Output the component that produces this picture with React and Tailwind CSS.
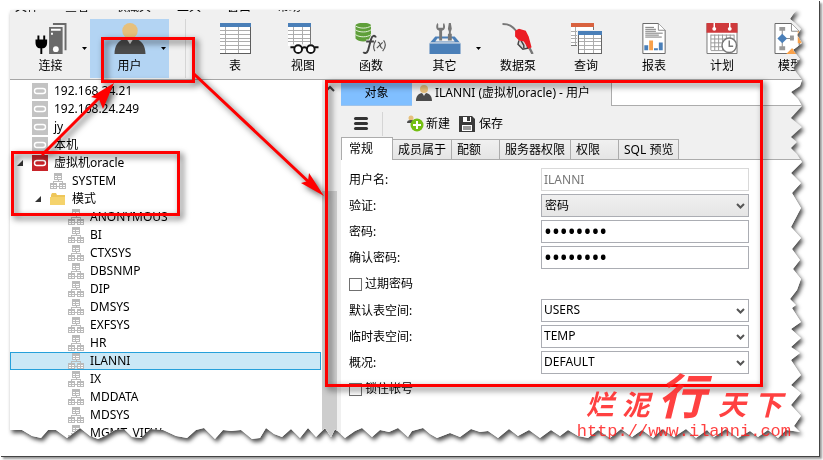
import React from "react";

/* ---------- torn paper outline ---------- */

// distance from the right side of the sheet, distance from its top
const RIGHT_TEAR = [
  [6, 0], [9, 3], [13, 9], [8, 13], [2, 19], [6, 25], [1, 33], [10, 40], [3, 49], [10, 58],
  [1, 70], [3, 76], [12, 82], [5, 89], [1, 96], [12, 108], [1, 117], [12, 127], [6, 132], [12, 138],
  [6, 144], [1, 152], [12, 163], [2, 173], [11, 183], [2, 198], [12, 217], [2, 228], [11, 239],
  [3, 250], [10, 259], [2, 269], [6, 280], [13, 289], [7, 295], [11, 298], [2, 312], [12, 319],
  [2, 328], [12, 337], [3, 343], [12, 350], [2, 365], [12, 375], [2, 383], [12, 395], [2, 406],
  [9, 416], [3, 422],
];

// distance from the left side, distance from the bottom (walked right to left)
const BOTTOM_TEAR = [
  [776, 9], [768, 1], [758, 9], [748, 2], [740, 8], [728, 1], [716, 10], [704, 2], [697, 9],
  [686, 1], [676, 10], [664, 2], [652, 10], [643, 1], [632, 9], [622, 2], [611, 10], [600, 1],
  [588, 9], [578, 1], [568, 3], [558, 9], [550, 3], [541, 9], [530, 1], [519, 9], [508, 3],
  [499, 10], [488, 1], [478, 8], [470, 7], [461, 10], [450, 2], [440, 6], [427, 1], [420, 5],
  [413, 11], [402, 8], [398, 2], [388, 11], [379, 7], [370, 9], [362, 2], [352, 11], [345, 8],
  [335, 1], [325, 10], [321, 2], [315, 11], [306, 2], [298, 11], [290, 1], [281, 10], [272, 2],
  [264, 5], [256, 11], [250, 1], [242, 0], [231, 9], [221, 8], [213, 9], [205, 0], [194, 11],
  [186, 9], [177, 1], [166, 3], [153, 9], [140, 10], [131, 1], [122, 2], [114, 10], [105, 9],
  [95, 3], [88, 0], [80, 3], [70, 11], [57, 1], [46, 9], [38, 9], [31, 1], [22, 3], [12, 9], [0, 9],
];

const tornOutline =
  "polygon(0 0, " +
  RIGHT_TEAR.map(([r, y]) => `calc(100% - ${r}px) ${y}px`).join(", ") +
  ", " +
  BOTTOM_TEAR.map(([x, b]) => `${x}px calc(100% - ${b}px)`).join(", ") +
  ")";

/* ---------- icons ---------- */

function ConnectIcon() {
  return (
    <svg width="32" height="32" viewBox="0 0 32 32">
      <path d="M18 0h14v28h-2V2H18z" fill="#6a6a6a" />
      <path d="M14 4h14v28H14z" fill="#6a6a6a" />
      <path d="M16 6h10v2H16zM16 10h2v2h-2z" fill="#fff" />
      <circle cx="21" cy="27" r="3" fill="#fff" />
      <path d="M2 13h2v4h4v-4h2v4h2v3c0 4-2 6-5 6v6H5v-6c-3 0-5-2-5-6v-3h2z" fill="#000" />
    </svg>
  );
}

function PersonIcon({ size = 32 }) {
  return (
    <svg width={size} height={size} viewBox="0 0 32 32">
      <circle cx="16" cy="8" r="8" fill="#e6c07c" />
      <path d="M0 32c0-9 4-14 11-16l5 3 5-3c7 2 11 7 11 16z" fill="#4b4b4b" />
      <path d="M13 17h6l-3 5z" fill="#ddd" />
    </svg>
  );
}

function TableIcon() {
  return (
    <svg width="32" height="32" viewBox="0 0 32 32" shapeRendering="crispEdges">
      <path d="M0 0h32v32H0z" fill="#5d5d5d" />
      <path d="M1 4h30v27H1z" fill="#fff" />
      <path d="M0 0h32v4H0z" fill="#4a7fb8" />
      <path d="M1 7.500h30M1 11.500h30M1 15.500h30M1 19.500h30M1 23.500h30M1 27.500h30M6.500 4v27M19.500 4v27" stroke="#aaa" fill="none" />
    </svg>
  );
}

function ViewIcon() {
  return (
    <svg width="32" height="32" viewBox="0 0 32 32">
      <g shapeRendering="crispEdges">
        <path d="M0 0h24v24H0z" fill="#777" />
        <path d="M1 4h22v20H1z" fill="#fff" />
        <path d="M0 0h24v4H0z" fill="#4a7fb8" />
        <path d="M1 7.500h22M1 11.500h22M1 15.500h22M1 19.500h22M6.500 4v20M15.500 4v20" stroke="#aaa" fill="none" />
      </g>
      <path d="M3 22h29v10H3z" fill="#f0f0f0" />
      <circle cx="11" cy="27" r="4" fill="#fff" stroke="#111" strokeWidth="2" />
      <circle cx="24" cy="27" r="4" fill="#fff" stroke="#111" strokeWidth="2" />
      <path d="M3 25h4M15 26q2.500-2 5 0M28 25h4" stroke="#111" strokeWidth="2" fill="none" />
    </svg>
  );
}

function FunctionIcon() {
  return (
    <svg width="32" height="32" viewBox="0 0 32 32">
      <path d="M0 2c3-3 13-3 16 0v14c-3 4-13 4-16 0z" fill="#5f9f3a" />
      <path d="M0 3c4 3 12 3 16 0M0 7c4 3 12 3 16 0M0 12c4 3 12 3 16 0" stroke="#e4f0dc" fill="none" />
      <path d="M21 15c-1-3-4-2-5 2l-3 11c-1 3-3 4-5 2M11 19h8" stroke="#f0f0f0" strokeWidth="4" fill="none" />
      <path d="M21 15c-1-3-4-2-5 2l-3 11c-1 3-3 4-5 2M11 19h8" stroke="#444" strokeWidth="2" fill="none" />
      <path d="M21 18q-4 6-1 11M29 18q4 5-1 11M23 20c3-1 2 7 5 6M28 20l-6 6" stroke="#555" strokeWidth="1.200" fill="none" />
    </svg>
  );
}

function ToolboxIcon() {
  return (
    <svg width="32" height="32" viewBox="0 0 32 32">
      <path d="M6 14h20l6 7H0z" fill="#4a7fb8" />
      <path d="M8 16h16l2 3H6z" fill="#f0f0f0" />
      <path d="M0 21h32v11H0z" fill="#4a7fb8" />
      <path d="M0 20.500h32" stroke="#f0f0f0" />
      <path d="M8 0C6 4 7 7 10 8v10h3V8c3-1 4-4 2-8l-1 1v4h-5V1z" fill="#777" />
      <path d="M20 0h2l1 6-1 3v2h1v7h-4v-7h1V9l-1-3z" fill="#777" />
    </svg>
  );
}

function PumpIcon() {
  return (
    <svg width="32" height="32" viewBox="0 0 32 32">
      <path d="M0 1c7 0 10 2 14 7" stroke="#777" strokeWidth="2" fill="none" />
      <path d="M17 18l-1 4 5 5 5-1-1-5" stroke="#444" strokeWidth="1.500" fill="#ddd" />
      <path d="M19 18l3 5v3" stroke="#444" strokeWidth="1.500" fill="none" />
      <path d="M13 8l4-2 7 2 3 6 3 11-3 2-5-8-5-1-4-4z" fill="#ec1c24" />
      <path d="M28 26l3 6" stroke="#777" strokeWidth="2.500" />
    </svg>
  );
}

function QueryIcon() {
  return (
    <svg width="32" height="32" viewBox="0 0 32 32" shapeRendering="crispEdges">
      <path d="M0 0h24v24H0z" fill="#777" />
      <path d="M1 4h22v19H1z" fill="#fff" />
      <path d="M0 0h24v4H0z" fill="#d9623f" />
      <path d="M1 8.500h22M1 12.500h22M1 16.500h22M1 20.500h22M5.500 4v19" stroke="#aaa" fill="none" />
      <path d="M7 7h25v25H7z" fill="#f0f0f0" />
      <path d="M8 8h24v24H8z" fill="#666" />
      <path d="M9 12h22v19H9z" fill="#fff" />
      <path d="M8 8h24v4H8z" fill="#4a7fb8" />
      <path d="M9 15.500h22M9 19.500h22M9 23.500h22M9 27.500h22M14.500 12v19M23.500 12v19" stroke="#aaa" fill="none" />
    </svg>
  );
}

function ReportIcon() {
  return (
    <svg width="32" height="32" viewBox="0 0 32 32">
      <path d="M4.500.5h16l7 7v24h-23z" fill="#fff" stroke="#666" />
      <path d="M20.500.5v7h7" fill="#fff" stroke="#888" />
      <path d="M7 4.500h9M7 6.500h11M7 8.500h11M7 10.500h18M7 12.500h14M7 14.500h17" stroke="#777" />
      <path d="M6 23h4v5H6zM16 26h4v2h-4zM21 20h4v8h-4z" fill="#4a7fb8" />
      <path d="M11 18h4v10h-4z" fill="#f9a14a" />
    </svg>
  );
}

function CalendarIcon() {
  return (
    <svg width="32" height="32" viewBox="0 0 32 32">
      <path d="M.5.5h31v31H.5z" fill="#fff" stroke="#777" />
      <path d="M0 0h32v10H0z" fill="#cf3a3c" />
      <circle cx="8" cy="6" r="2" fill="#fff" />
      <circle cx="24" cy="6" r="2" fill="#fff" />
      <path d="M8 0v6M24 0v6" stroke="#fff" strokeWidth="1.500" />
      <path d="M4.500 12.500h24M4.500 16.500h24M4.500 20.500h24M4.500 24.500h24M4.500 28.500h24M4.500 12v16M8.500 12v16M12.500 12v16M16.500 12v16M20.500 12v16M24.500 12v16M28.500 12v16" stroke="#999" />
      <circle cx="23.500" cy="23" r="7.500" fill="#fff" stroke="#777" strokeWidth="1.500" />
      <path d="M23.500 18v6h4" stroke="#777" strokeWidth="1.500" fill="none" />
    </svg>
  );
}

function ModelIcon() {
  return (
    <svg width="32" height="32" viewBox="0 0 32 32">
      <path d="M.5.5h17l8 8v23H.5z" fill="#fff" stroke="#666" />
      <path d="M17.500.5v8h8" fill="#fff" stroke="#888" />
      <path d="M8 6v20M8 16h12" stroke="#888" />
      <path d="M5 4h6v4H5zM5 24h6v4H5zM16 13h4v5h-4z" fill="#999" />
      <path d="M8 11l5 5-5 5-5-5z" fill="#4a7fb8" />
      <path d="M12 32l6-6 10 6zM24 8l4 3v10h-4z" fill="#f9a14a" />
    </svg>
  );
}

function ServerIcon({ active }) {
  return (
    <svg width="16" height="16" viewBox="0 0 16 16" className="shrink-0">
      <path d="M0 0h16v16H0z" fill={active ? "#c8242a" : "#c3c3c3"} />
      <rect x="2.500" y="5.500" width="11" height="5" rx="2.500" fill="none" stroke="#fff" strokeWidth="1.400" />
    </svg>
  );
}

function SchemaIcon() {
  return (
    <svg width="16" height="16" viewBox="0 0 16 16" className="shrink-0" shapeRendering="crispEdges">
      <path d="M4 0h8v7H4zM0 10h7v6H0zM9 10h7v6H9z" fill="#bababa" />
      <path d="M5 3h2v1H5zM8 3h3v1H8zM5 5h2v1H5zM8 5h3v1H8zM1 12h2v1H1zM4 12h2v1H4zM1 14h2v1H1zM4 14h2v1H4zM10 12h2v1h-2zM13 12h2v1h-2zM10 14h2v1h-2zM13 14h2v1h-2z" fill="#fff" />
      <path d="M8 7v2M3.500 10V8.500h9V10M7 13.500h2" stroke="#bababa" fill="none" />
    </svg>
  );
}

function FolderIcon() {
  return (
    <svg width="16" height="16" viewBox="0 0 16 16" className="shrink-0">
      <path d="M1 4l1-2h4l1 2h8v10H1z" fill="#eec65a" />
      <path d="M0 6h15v8H0z" fill="#f5d36c" />
    </svg>
  );
}

function NewUserIcon() {
  return (
    <svg width="17" height="17" viewBox="0 0 17 17">
      <circle cx="4" cy="3" r="2.500" fill="#e6c07c" />
      <path d="M0 8c0-2 1-3 4-3s4 1 4 3z" fill="#4b4b4b" />
      <circle cx="10" cy="10" r="6.500" fill="#74bf12" />
      <path d="M10 6v8M6 10h8" stroke="#fff" strokeWidth="2" />
    </svg>
  );
}

function SaveIcon() {
  return (
    <svg width="16" height="16" viewBox="0 0 16 16">
      <path d="M0 0h13l3 3v13H0z" fill="#3b3b3b" />
      <path d="M4 1h8v5H4zM3 9h10v6H3z" fill="#fff" />
      <path d="M8 1h3v4H8zM4 10.500h8v1H4zM4 12.500h8v1H4z" fill="#3b3b3b" />
    </svg>
  );
}

/* ---------- window ---------- */

const MENUS = ["文件", "查看", "收藏夹", "工具", "窗口", "帮助"];

function ToolButton({ icon, label, menu, active }) {
  return (
    <button
      className={
        "relative flex h-[59px] shrink-0 flex-col items-center pt-1 " +
        (menu ? "w-[79px] " : "w-[68px] ") +
        (active ? "bg-[#b3d4f3]" : "")
      }
    >
      {icon}
      <span className="leading-6">{label}</span>
      {menu && (
        <svg width="5" height="3" viewBox="0 0 5 3" className="absolute right-[3px] top-7">
          <path d="M0 0h5L2.500 3z" fill="#000" />
        </svg>
      )}
    </button>
  );
}

function Toolbar() {
  return (
    <header className="shrink-0 border-b border-[#a6a6a6] bg-[#f0f0f0]">
      <nav className="flex h-[2px] items-end gap-[26px] overflow-hidden pl-[5px]">
        {MENUS.map((m) => (
          <button key={m} className="shrink-0 leading-[10px]">{m}</button>
        ))}
      </nav>
      <div className="flex pl-px pb-px pt-[7px]">
        <ToolButton icon={<ConnectIcon />} label="连接" menu />
        <ToolButton icon={<PersonIcon />} label="用户" menu active />
        <div className="mr-[15px] ml-4 w-px shrink-0 bg-[#d5d5d5]" />
        <ToolButton icon={<TableIcon />} label="表" />
        <ToolButton icon={<ViewIcon />} label="视图" />
        <ToolButton icon={<FunctionIcon />} label="函数" />
        <ToolButton icon={<ToolboxIcon />} label="其它" menu />
        <ToolButton icon={<PumpIcon />} label="数据泵" />
        <ToolButton icon={<QueryIcon />} label="查询" />
        <ToolButton icon={<ReportIcon />} label="报表" />
        <ToolButton icon={<CalendarIcon />} label="计划" />
        <ToolButton icon={<ModelIcon />} label="模型" />
      </div>
    </header>
  );
}

const SCHEMAS = [
  "ANONYMOUS", "BI", "CTXSYS", "DBSNMP", "DIP", "DMSYS", "EXFSYS", "HR",
  "ILANNI", "IX", "MDDATA", "MDSYS", "MGMT_VIEW",
];

const TREE = [
  { level: 0, icon: <ServerIcon />, text: "192.168.24.21" },
  { level: 0, icon: <ServerIcon />, text: "192.168.24.249" },
  { level: 0, icon: <ServerIcon />, text: "jy" },
  { level: 0, icon: <ServerIcon />, text: "本机" },
  { level: 0, icon: <ServerIcon active />, text: "虚拟机oracle", open: true },
  { level: 1, icon: <SchemaIcon />, text: "SYSTEM" },
  { level: 1, icon: <FolderIcon />, text: "模式", open: true },
  ...SCHEMAS.map((text) => ({ level: 2, icon: <SchemaIcon />, text, selected: text === "ILANNI" })),
];

const INDENT = ["pl-[3px]", "pl-[21px]", "pl-[39px]"];

function Sidebar() {
  return (
    <aside className="flex w-[327px] shrink-0">
      <ul className="min-w-0 flex-1 pt-[2px]">
        {TREE.map((n) => (
          <li
            key={n.text}
            className={
              "mr-px flex h-[18px] items-center border " + INDENT[n.level] + " " +
              (n.selected ? "border-[#26a0da] bg-[#cbe8f6]" : "border-transparent")
            }
          >
            <span className="flex w-[18px] shrink-0 pl-[3px]">
              {n.open && (
                <svg width="6" height="6" viewBox="0 0 6 6">
                  <path d="M6 0v6H0z" fill="#333" />
                </svg>
              )}
            </span>
            {n.icon}
            <span className="ml-[6px] leading-4">{n.text}</span>
          </li>
        ))}
      </ul>
      <div className="flex w-[15px] flex-col bg-[#f0f0f0]">
        <svg width="15" height="17" viewBox="0 0 15 17" className="shrink-0">
          <path d="M4 11l4-4 4 4" stroke="#444" strokeWidth="2" fill="none" />
        </svg>
        <div className="mt-[94px] flex-1 bg-[#cdcdcd]" />
      </div>
    </aside>
  );
}

const PAGES = ["成员属于", "配额", "服务器权限", "权限", "SQL 预览"];

function Field({ id, label, children }) {
  return (
    <div className="grid grid-cols-[192px_208px] items-center">
      <label htmlFor={id}>{label}</label>
      {children}
    </div>
  );
}

function TextField({ id, label, ...rest }) {
  return (
    <Field id={id} label={label}>
      <input
        id={id}
        className={
          "h-[23px] w-full border bg-white px-[2px] outline-none " +
          (rest.disabled ? "border-[#d9d9d9] pb-px text-[#777]" : "border-[#abadb3] pb-px text-[21px] leading-5")
        }
        {...rest}
      />
    </Field>
  );
}

function SelectField({ id, label, value, shaded }) {
  return (
    <Field id={id} label={label}>
      <div className="relative">
        <select
          id={id}
          defaultValue={value}
          className={
            "block h-[23px] w-full appearance-none border border-[#abadb3] pr-5 outline-none " +
            (shaded ? "bg-linear-to-b from-[#f0f0f0] to-[#e5e5e5] pl-[3px]" : "bg-white pb-px pl-[2px]")
          }
        >
          <option>{value}</option>
        </select>
        <svg width="9" height="7" viewBox="0 0 9 7" className="pointer-events-none absolute right-1 top-[9px]">
          <path d="M1 1l3.500 3.500L8 1" stroke="#555" strokeWidth="2" fill="none" />
        </svg>
      </div>
    </Field>
  );
}

function CheckField({ label }) {
  return (
    <label className="flex h-6 items-center gap-[3px]">
      <input type="checkbox" className="size-[13px] appearance-none border border-[#707070] bg-white" />
      {label}
    </label>
  );
}

function UserEditor() {
  return (
    <main className="ml-1 flex min-w-0 flex-1 flex-col">
      <div className="flex h-[26px] shrink-0">
        <button className="w-[71px] shrink-0 border-b border-[#9fc3ea] bg-[#80bfff]">对象</button>
        <button className="flex w-[199px] shrink-0 items-center gap-[3px] whitespace-nowrap pl-1">
          <PersonIcon size={16} />
          ILANNI (虚拟机oracle) - 用户
        </button>
        <div className="flex-1 border-b border-l border-[#acacac] bg-white" />
      </div>

      <div className="flex h-[31px] shrink-0 items-center pl-[13px] pt-1">
        <button aria-label="菜单" className="flex w-[14px] flex-col gap-[2px]">
          <span className="h-[3px] rounded-sm bg-[#333]" />
          <span className="h-[3px] rounded-sm bg-[#333]" />
          <span className="h-[3px] rounded-sm bg-[#333]" />
        </button>
        <div className="ml-[14px] h-6 w-px bg-[#d5d5d5]" />
        <button className="ml-6 flex items-center gap-[2px]">
          <NewUserIcon />
          新建
        </button>
        <button className="ml-[9px] flex items-center gap-1">
          <SaveIcon />
          保存
        </button>
      </div>

      <div className="flex h-[23px] shrink-0 items-end">
        <button className="h-[23px] w-[52px] shrink-0 border-x border-t border-[#acacac] bg-white pl-[7px] text-left">
          常规
        </button>
        <div className="flex h-[21px] flex-1 border-b border-[#acacac]">
          {PAGES.map((p) => (
            <button
              key={p}
              className="h-5 min-w-12 shrink-0 whitespace-nowrap border-r border-t border-[#acacac] bg-linear-to-b from-[#f0f0f0] to-[#e5e5e5] px-[5px] text-left"
            >
              {p}
            </button>
          ))}
        </div>
      </div>

      <form className="flex flex-1 flex-col gap-[3px] bg-white pl-2 pt-2">
        <TextField id="name" label="用户名:" defaultValue="ILANNI" disabled />
        <SelectField id="auth" label="验证:" value="密码" shaded />
        <TextField id="pass" label="密码:" type="password" defaultValue="password" />
        <TextField id="pass2" label="确认密码:" type="password" defaultValue="password" />
        <CheckField label="过期密码" />
        <SelectField id="space" label="默认表空间:" value="USERS" />
        <SelectField id="temp" label="临时表空间:" value="TEMP" />
        <SelectField id="profile" label="概况:" value="DEFAULT" />
        <CheckField label="锁住帐号" />
      </form>
    </main>
  );
}

/* ---------- red marks drawn over the window ---------- */

function Marks() {
  return (
    <svg
      width="823"
      height="460"
      viewBox="0 0 823 460"
      className="pointer-events-none absolute left-0 top-0 drop-shadow-[3px_3px_3px_rgba(0,0,0,0.65)]"
    >
      <g fill="none" stroke="#fe0000" strokeWidth="3">
        <path d="M102.500 38.500h91v43h-91zM12.500 152.500h166v62h-166zM326.500 81.500h435v304h-435z" />
        <path d="M42 155L100 97M194 74L312 185" />
      </g>
      <path d="M114 83L91 97l8 2 4 10zM324 196l-23-13 7-2 1-8z" fill="#fe0000" />
    </svg>
  );
}

function Watermark() {
  return (
    <div className="pointer-events-none absolute right-7 bottom-[14px] flex flex-col items-center text-[#ff2020] opacity-85">
      <div className="flex items-end gap-2 text-[28px] leading-9 font-bold italic">
        <span>烂</span>
        <span>泥</span>
        <span className="pr-1 text-[48px] leading-[52px]">行</span>
        <span>天</span>
        <span>下</span>
      </div>
      <a href="#top" className="font-['Liberation_Mono',monospace] text-[17px] leading-5">
        http://www.ilanni.com
      </a>
    </div>
  );
}

export default function App() {
  return (
    <div className="h-screen overflow-hidden bg-white pr-1 pb-1 font-['Noto_Sans','Noto_Sans_CJK_SC',sans-serif] text-[12px] leading-4 text-black">
      <div className="relative h-full bg-white pt-[10px] pr-4 pb-[17px] pl-[10px] shadow-[1px_1px_0_#444,3px_3px_2px_#999]">
        <div className="h-full drop-shadow-[2px_3px_2px_rgba(0,0,0,0.7)]">
          <div className="flex h-full flex-col overflow-hidden bg-[#f0f0f0]" style={{ clipPath: tornOutline }}>
            <Toolbar />
            <div className="flex min-h-0 flex-1">
              <div className="flex bg-white">
                <Sidebar />
              </div>
              <UserEditor />
            </div>
          </div>
        </div>
        <Marks />
        <Watermark />
      </div>
    </div>
  );
}
